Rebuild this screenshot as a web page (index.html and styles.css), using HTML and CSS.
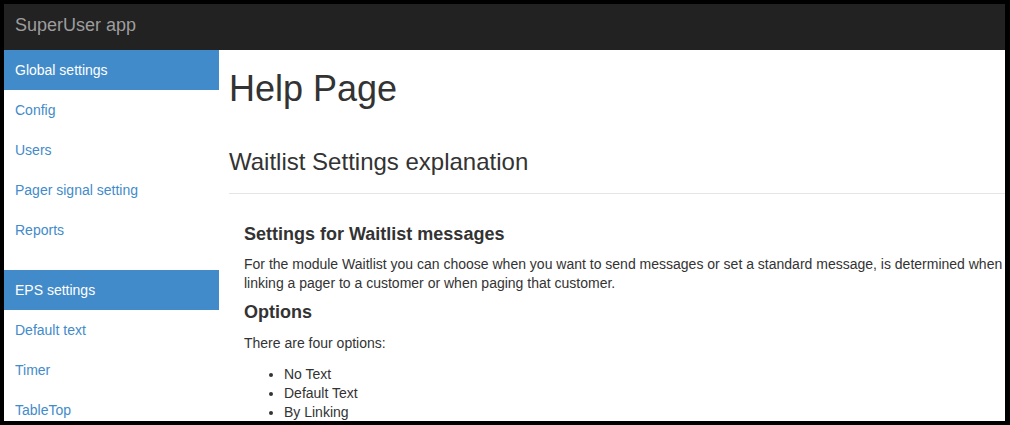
FILE: index.html
```html
<!DOCTYPE html>
<html lang="en">
<head>
  <meta charset="UTF-8" />
  <title>SuperUser app - Help Page</title>
  <link rel="stylesheet" href="styles.css">
</head>
<body>
  <div class="app">
    <div class="navbar">
      <a class="brand" href="#">SuperUser app</a>
    </div>
    <div class="layout">
      <div class="sidebar">
        <ul class="nav">
          <li class="active"><a href="#">Global settings</a></li>
          <li><a href="#">Config</a></li>
          <li><a href="#">Users</a></li>
          <li><a href="#">Pager signal setting</a></li>
          <li><a href="#">Reports</a></li>
        </ul>
        <ul class="nav">
          <li class="active"><a href="#">EPS settings</a></li>
          <li><a href="#">Default text</a></li>
          <li><a href="#">Timer</a></li>
          <li><a href="#">TableTop</a></li>
        </ul>
      </div>
      <div class="main">
        <h1>Help Page</h1>
        <h2>Waitlist Settings explanation</h2>
        <hr />
        <div class="section">
          <h3>Settings for Waitlist messages</h3>
          <p>For the module Waitlist you can choose when you want to send messages or set a standard message, is determined when linking a pager to a customer or when paging that customer.</p>
          <h3 class="options">Options</h3>
          <p class="intro">There are four options:</p>
          <ul class="list">
            <li>No Text</li>
            <li>Default Text</li>
            <li>By Linking</li>
          </ul>
        </div>
      </div>
    </div>
  </div>
</body>
</html>
```

FILE: styles.css
```css
body {
  background: #000;
  font-family: 'Liberation Sans', Arial, sans-serif;
  margin: 0;
  color: #333;
  font-size: 14px;
}
.app {
  margin: 4px 5px 4px 4px;
  height: 417px;
  background: #fff;
  overflow: hidden;
  display: flex;
  flex-direction: column;
}
.navbar {
  background: #222;
  height: 46px;
  box-sizing: border-box;
  padding: 11px 11px;
  flex-shrink: 0;
}
.brand {
  color: #9d9d9d;
  font-size: 18px;
  line-height: 20px;
  text-decoration: none;
}
.layout {
  display: flex;
  flex: 1;
}
.sidebar {
  width: 215px;
  flex-shrink: 0;
}
.nav {
  list-style: none;
  margin: 0;
  padding: 0;
}
.nav + .nav {
  margin-top: 20px;
}
.nav a {
  display: block;
  padding: 10px 11px;
  line-height: 20px;
  color: #428bca;
  text-decoration: none;
}
.nav .active a {
  background: #428bca;
  color: #fff;
}
.main {
  flex: 1;
  padding-left: 10px;
}
h1 {
  font-size: 36px;
  font-weight: normal;
  line-height: 40px;
  margin: 19px 0 0;
}
h2 {
  font-size: 24px;
  font-weight: normal;
  line-height: 28px;
  margin: 39px 0 0;
}
hr {
  border: 0;
  border-top: 1px solid #e5e5e5;
  margin: 17px 0 0;
}
.section {
  padding-left: 15px;
}
h3 {
  font-size: 18px;
  line-height: 20px;
  font-weight: bold;
  margin: 30px 0 0;
}
p {
  line-height: 19px;
  margin: 11px 0 0;
}
h3.options {
  margin-top: 9px;
}
p.intro {
  margin-top: 12px;
}
.list {
  margin: 12px 0 0;
  padding-left: 40px;
  line-height: 19px;
}
```
